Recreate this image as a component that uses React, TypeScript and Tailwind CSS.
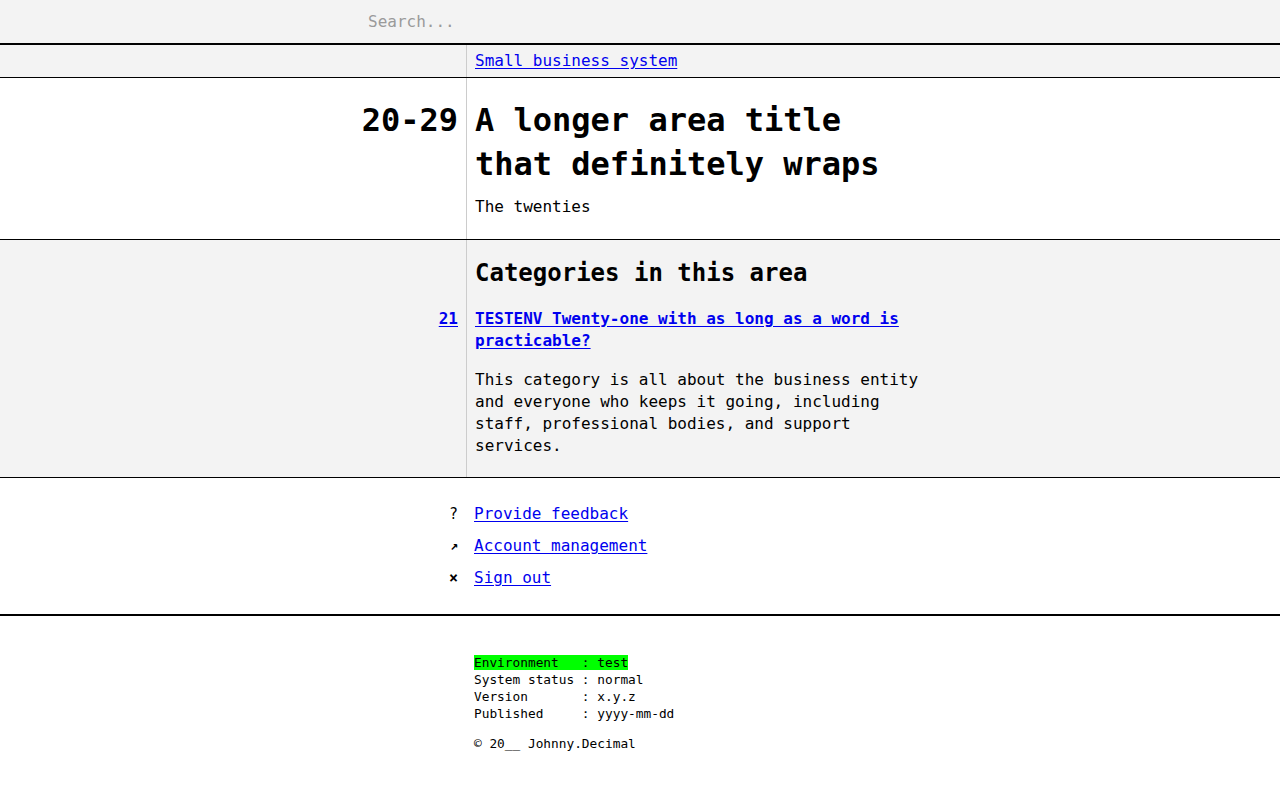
import React from "react";

const mono = { fontFamily: '"DejaVu Sans Mono", "Liberation Mono", monospace' };

export default function App() {
  return (
    <div className="min-h-[787px] bg-white text-black" style={mono}>
      {/* Header with search */}
      <header className="h-[45px] bg-[#f3f3f3] border-b-2 border-black flex items-center">
        <input
          type="text"
          placeholder="Search..."
          className="ml-[360px] w-[560px] h-[43px] px-2 bg-transparent text-[16px] outline-none placeholder:text-[#9a9a9a]"
          style={mono}
        />
      </header>

      {/* Breadcrumb row */}
      <div className="grid grid-cols-[467px_1fr] bg-[#f3f3f3] border-b border-black">
        <div className="border-r border-[#cccccc]" />
        <div className="px-2 py-1 text-[16px] leading-6">
          <a href="#" className="text-[#0000ee] underline underline-offset-2">
            Small business system
          </a>
        </div>
      </div>

      {/* Area title row */}
      <div className="grid grid-cols-[467px_1fr] bg-white border-b border-black">
        <div className="border-r border-[#cccccc] pt-5 pr-2 text-right text-[32px] leading-[44px] font-bold">
          20-29
        </div>
        <div className="px-2 pt-5 pb-5">
          <h1 className="max-w-[450px] text-[32px] leading-[44px] font-bold">
            A longer area title that definitely wraps
          </h1>
          <p className="mt-[9px] text-[16px] leading-6">The twenties</p>
        </div>
      </div>

      {/* Categories row */}
      <div className="grid grid-cols-[467px_1fr] bg-[#f3f3f3] border-b border-black">
        <div className="border-r border-[#cccccc] pt-[68px] pr-2 text-right text-[16px] leading-[22px] font-bold">
          <a href="#" className="text-[#0000ee] underline underline-offset-2">
            21
          </a>
        </div>
        <div className="px-2 pt-[17px] pb-[20px]">
          <h2 className="text-[24px] leading-8 font-bold">Categories in this area</h2>
          <div className="mt-[19px] max-w-[450px] text-[16px] leading-[22px] font-bold">
            <a href="#" className="text-[#0000ee] underline underline-offset-2">
              TESTENV Twenty-one with as long as a word is practicable?
            </a>
          </div>
          <p className="mt-[17px] max-w-[450px] text-[16px] leading-[22px]">
            This category is all about the business entity and everyone who keeps it going,
            including staff, professional bodies, and support services.
          </p>
        </div>
      </div>

      {/* Links */}
      <div className="border-b-2 border-black pt-6 pb-6">
        <ul className="flex flex-col gap-2">
          {[
            { icon: "?", label: "Provide feedback", cls: "text-[15px]" },
            { icon: "↗", label: "Account management", cls: "text-[13px] font-bold" },
            { icon: "×", label: "Sign out", cls: "text-[15px] font-bold" },
          ].map((l) => (
            <li key={l.label} className="grid grid-cols-[466px_1fr] text-[16px] leading-6">
              <span className={"pr-2 text-right " + l.cls}>{l.icon}</span>
              <a href="#" className="pl-2 text-[#0000ee] underline underline-offset-2 justify-self-start">
                {l.label}
              </a>
            </li>
          ))}
        </ul>
      </div>

      {/* Footer */}
      <footer className="pl-[474px] pt-[38px] pb-8 text-[12.8px] leading-[17px]">
        <div className="whitespace-pre">
          <div>
            <span className="bg-[#00ff00]">Environment   : test</span>
          </div>
          <div>System status : normal</div>
          <div>Version       : x.y.z</div>
          <div>Published     : yyyy-mm-dd</div>
        </div>
        <p className="mt-[13px]">© 20__ Johnny.Decimal</p>
      </footer>
    </div>
  );
}
